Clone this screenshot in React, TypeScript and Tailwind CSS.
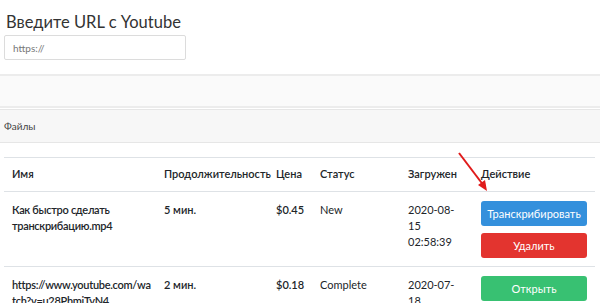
const rows = [
  {
    name: "Как быстро сделать транскрибацию.mp4",
    duration: "5 мин.",
    price: "$0.45",
    status: "New",
    date: ["2020-08-", "15", "02:58:39"],
    actions: "new",
  },
  {
    name: "https://www.youtube.com/watch?v=u28PhmjTyN4",
    duration: "2 мин.",
    price: "$0.18",
    status: "Complete",
    date: ["2020-07-", "18", "10:12:05"],
    actions: "done",
  },
];

export default function App() {
  return (
    <div
      className="relative h-[303px] w-[600px] overflow-hidden bg-white text-[#212529]"
      style={{ fontFamily: "Lato, 'Noto Sans', sans-serif" }}
    >
      <div className="px-[4px] pt-[12px]">
        <h2 className="pl-[2px] text-[16.5px] leading-[20px] text-[#333]">Введите URL с Youtube</h2>
        <input
          className="mt-[3px] h-[25px] w-[182px] rounded-[2px] border border-[#dcdcdc] px-[8px] text-[10px] text-[#555] outline-none placeholder:text-[#777]"
          placeholder="https://"
        />
      </div>

      <div className="mt-[14px] h-[34px] border-y-[2px] border-[#ececec] bg-[#fafafa]" />
      <div className="mt-[1px] flex h-[34px] items-center border-y border-[#e6e6e6] bg-[#f7f7f7] px-[4px] text-[10px] text-[#444]">
        Файлы
      </div>

      <div className="px-[4px] pt-[14px]">
        <table className="w-[591px] table-fixed border-collapse text-[11px]">
          <colgroup>
            <col className="w-[152px]" />
            <col className="w-[112px]" />
            <col className="w-[44px]" />
            <col className="w-[88px]" />
            <col className="w-[73px]" />
            <col />
          </colgroup>
          <thead>
            <tr className="border-y border-[#dee2e6] text-left">
              <th className="h-[34px] pl-[8px] font-semibold">Имя</th>
              <th className="pl-[8px] font-semibold">Продолжительность</th>
              <th className="pl-[8px] font-semibold">Цена</th>
              <th className="pl-[8px] font-semibold">Статус</th>
              <th className="pl-[8px] font-semibold">Загружен</th>
              <th className="pl-[8px] font-semibold">Действие</th>
            </tr>
          </thead>
          <tbody>
            {rows.map((r) => (
              <tr key={r.name} className="border-b border-[#dee2e6] align-top leading-[16px]">
                <td className="pt-[10px] pb-[9px] pl-[8px] pr-[5px] font-semibold tracking-[-0.3px] [overflow-wrap:anywhere]">
                  {r.name}
                </td>
                <td className="pt-[10px] pl-[8px] font-semibold">{r.duration}</td>
                <td className="pt-[10px] pl-[8px] font-semibold">{r.price}</td>
                <td className="pt-[10px] pl-[8px]">{r.status}</td>
                <td className="pt-[10px] pl-[8px]">
                  {r.date.map((d) => (
                    <div key={d}>{d}</div>
                  ))}
                </td>
                <td className="pt-[9px] pb-[8px] pl-[8px] pr-[8px]">
                  {r.actions === "new" ? (
                    <div className="flex flex-col gap-[7px]">
                      <button className="h-[25px] w-[106px] rounded-[3px] bg-[#3490dc] text-[11px] text-white">
                        Транскрибировать
                      </button>
                      <button className="h-[25px] w-[106px] rounded-[3px] bg-[#e3342f] text-[11px] text-white">
                        Удалить
                      </button>
                    </div>
                  ) : (
                    <button className="h-[25px] w-[106px] rounded-[3px] bg-[#38c172] text-[11px] text-white">
                      Открыть
                    </button>
                  )}
                </td>
              </tr>
            ))}
          </tbody>
        </table>
      </div>

      <svg className="pointer-events-none absolute left-[456px] top-[150px]" width="36" height="44" viewBox="0 0 36 44">
        <line x1="3" y1="3" x2="28" y2="36" stroke="#e01b1b" strokeWidth="2" />
        <polygon points="31,41 22,35 29,30" fill="#e01b1b" />
      </svg>
    </div>
  );
}
